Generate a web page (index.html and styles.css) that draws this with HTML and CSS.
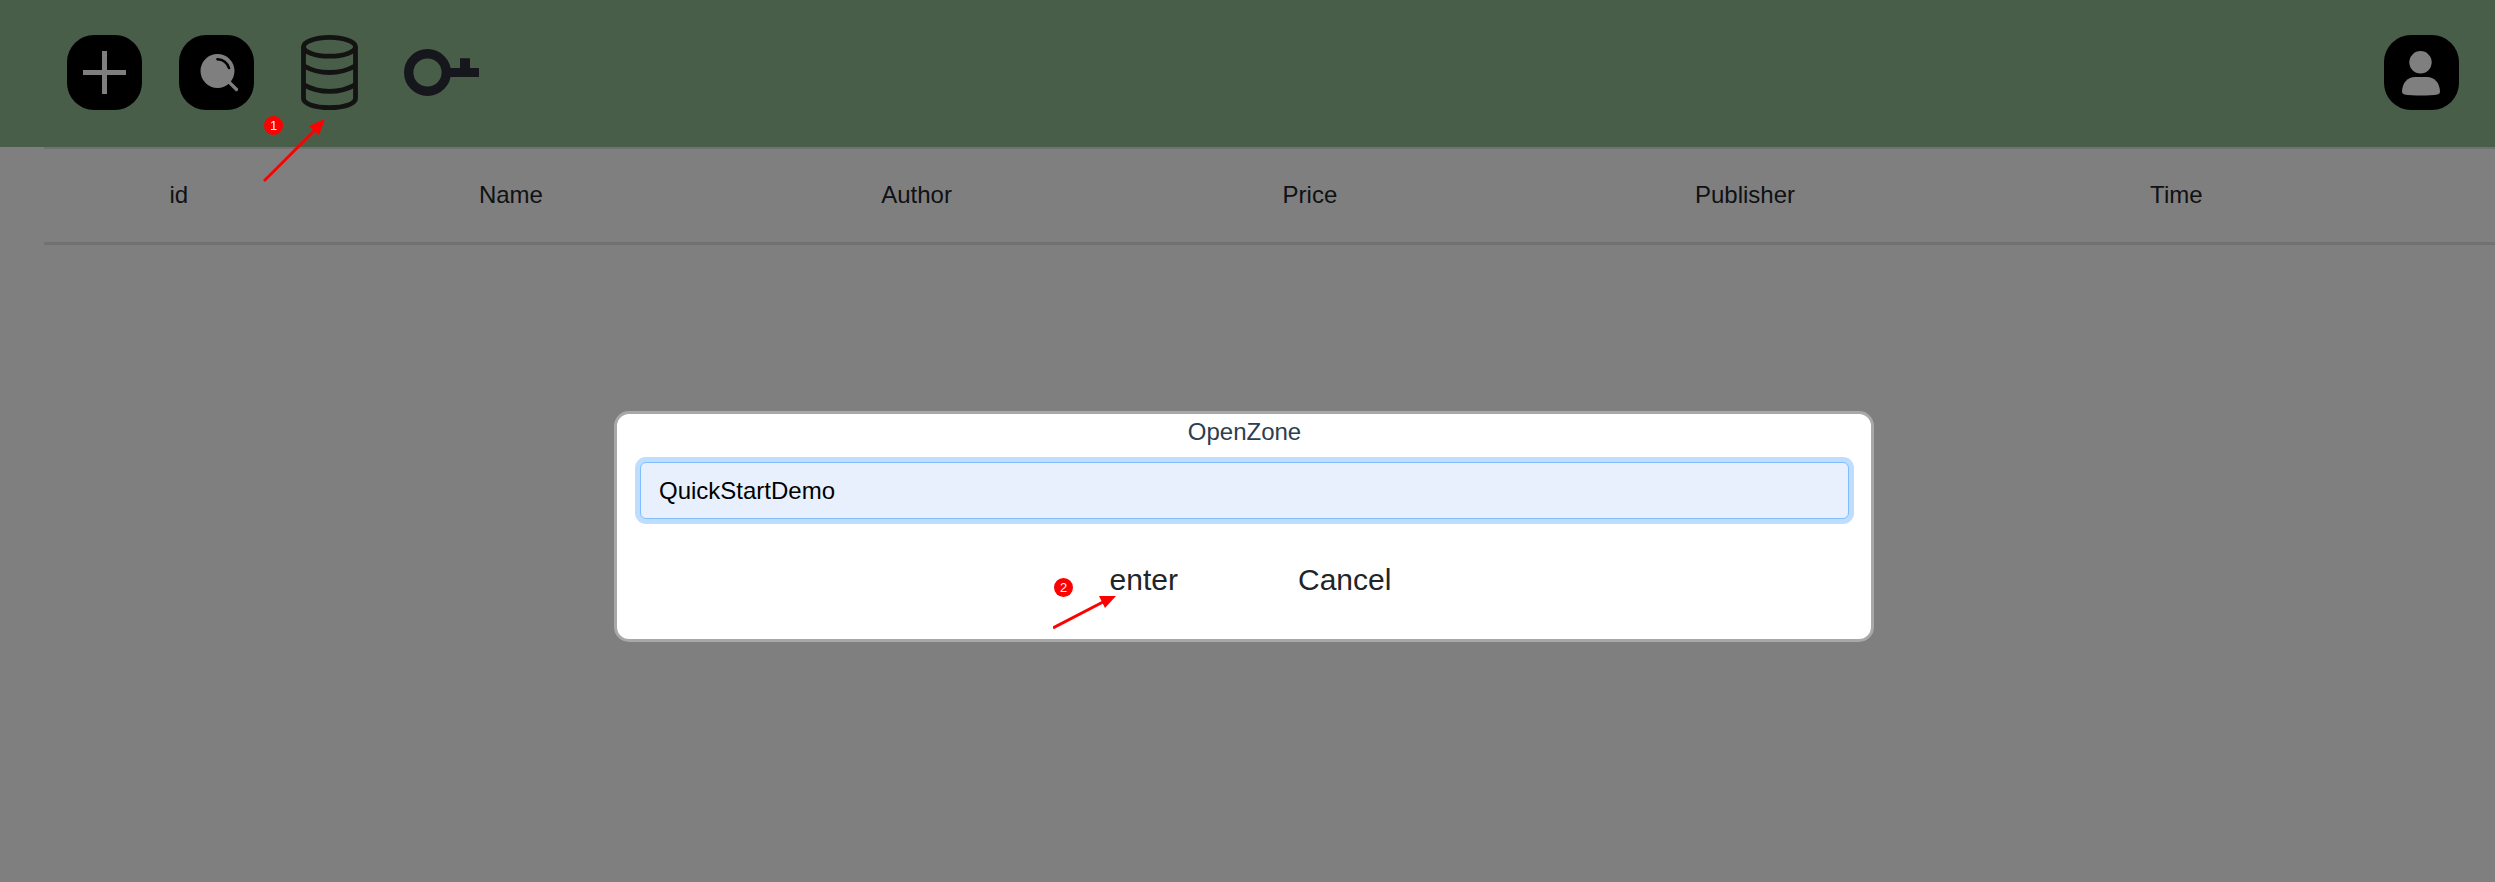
FILE: index.html
```html
<!DOCTYPE html>
<html lang="en">
<head>
<meta charset="utf-8">
<title>OpenZone</title>
<link rel="stylesheet" href="styles.css">
</head>
<body>
<header class="toolbar">
  <nav class="tools">
    <button class="tile tile-dark" type="button" aria-label="Add">
      <svg viewBox="0 0 75 75"><path d="M35 16h5v19h19v5H40v19h-5V40H16v-5h19z" fill="#fff"/></svg>
    </button>
    <button class="tile tile-dark" type="button" aria-label="Search">
      <svg viewBox="0 0 75 75" fill="none" stroke-linecap="round">
        <circle cx="38.500" cy="36" r="17" fill="#fff"/>
        <path d="M50 47L57.500 54.500" stroke="#fff" stroke-width="3.200"/>
        <path d="M38.500 24.200C44 24.200 48.500 28 50 33" stroke="#000" stroke-width="2.600"/>
      </svg>
    </button>
    <button class="tile" type="button" aria-label="Open zone">
      <svg viewBox="0 0 75 75" fill="none" stroke="#262626" stroke-width="4.800">
        <ellipse cx="38.500" cy="11.800" rx="26" ry="9.400"/>
        <path d="M12.500 11.800V63.500C12.500 68.500 23 72.600 38.500 72.600S64.500 68.500 64.500 63.500V11.800"/>
        <path d="M13 31C20 35 29 37.500 38.500 37.500S57 35 64 31M13 49.800C20 53.800 29 56.300 38.500 56.300S57 53.800 64 49.800"/>
      </svg>
    </button>
    <button class="tile" type="button" aria-label="Key">
      <svg viewBox="0 0 75 75">
        <circle cx="24.500" cy="37.500" r="18.800" fill="none" stroke="#2c2e38" stroke-width="9.400"/>
        <path d="M46 33H57V23.200H67V33H76V42H46z" fill="#2c2e38"/>
      </svg>
    </button>
  </nav>
  <button class="tile tile-dark" type="button" aria-label="Account">
    <svg viewBox="0 0 75 75" fill="#fff">
      <circle cx="36.500" cy="27.300" r="11.200"/>
      <path d="M18 57C18 47.500 24 42 31 42H43C50 42 56 47.500 56 57Q56 58.800 53.500 59.400C46 60.700 28 60.700 20.500 59.400Q18 58.800 18 57z"/>
    </svg>
  </button>
</header>

<main class="content">
  <table class="books">
    <thead>
      <tr>
        <th class="col-id" scope="col">id</th>
        <th class="col-name" scope="col">Name</th>
        <th class="col-author" scope="col">Author</th>
        <th class="col-price" scope="col">Price</th>
        <th class="col-publisher" scope="col">Publisher</th>
        <th class="col-time" scope="col">Time</th>
        <td></td>
      </tr>
    </thead>
  </table>
</main>

<div class="overlay">
  <form class="dialog" role="dialog" aria-labelledby="zone-label">
    <label class="dialog-title" id="zone-label" for="zone">OpenZone</label>
    <input class="field" id="zone" type="text" value="QuickStartDemo">
    <div class="actions">
      <button class="action" type="button">enter</button>
      <button class="action" type="button">Cancel</button>
    </div>
    <div class="step step-two">
      <span class="badge">2</span>
      <svg class="arrow" width="64" height="34" viewBox="0 0 64 34"><path d="M0 32L50 6" stroke="#f00" stroke-width="3"/><path d="M63 0L46 0L52 12z" fill="#f00"/></svg>
    </div>
  </form>
</div>

<div class="step step-one">
  <span class="badge">1</span>
  <svg class="arrow" width="64" height="64" viewBox="0 0 64 64"><path d="M1 62L52 11" stroke="#f00" stroke-width="3"/><path d="M62 0L46 7L56 16z" fill="#f00"/></svg>
</div>
</body>
</html>
```
FILE: styles.css
```css
* {
  box-sizing: border-box;
}

body {
  margin: 0;
  min-height: 100vh;
  background: #fff;
  color: #212529;
  font: 24px/36px "Liberation Sans", Arial, sans-serif;
}

button {
  border: 0;
  background: none;
  color: inherit;
  font: inherit;
}

.toolbar {
  display: flex;
  justify-content: space-between;
  padding: 35px 36px 37px 67px;
  background: #90bc90;
}

.tools {
  display: flex;
  gap: 37px;
}

.tile {
  width: 75px;
  height: 75px;
  padding: 0;
  border-radius: 27px;
}

.tile-dark {
  background: #000;
}

.tile svg {
  display: block;
  width: 100%;
  overflow: visible;
}

.content {
  padding-left: 44px;
}

.books {
  width: 100%;
  border-collapse: separate;
  border-spacing: 0;
  table-layout: fixed;
  border-top: 2px solid #dee2e6;
  border-bottom: 3px solid #dee2e6;
}

.books th {
  padding: 28px 0 29px;
  font-weight: 400;
  text-align: center;
}

.col-id { width: 11%; }
.col-name { width: 16.1%; }
.col-author { width: 17%; }
.col-price { width: 15.1%; }
.col-publisher { width: 20.4%; }
.col-time { width: 14.8%; }

.overlay {
  position: fixed;
  inset: 0;
  display: flex;
  justify-content: center;
  align-items: center;
  padding: 170px 7px 0 0;
  background: rgba(0, 0, 0, 0.5);
}

.dialog {
  position: relative;
  display: flex;
  flex-direction: column;
  width: 1260px;
  max-width: 100%;
  padding: 0 22px 37px 23px;
  border: 3px solid #a8a8a8;
  border-radius: 15px;
  background: #fff;
}

.dialog-title {
  margin-bottom: 12px;
  color: #2c3e50;
  text-align: center;
}

.field {
  width: 100%;
  padding: 10px 18px 9px;
  border: 1px solid #80bdff;
  border-radius: 6px;
  outline: 0;
  background: #e8f0fe;
  box-shadow: 0 0 0 5px #bfdeff;
  color: #000;
  font: inherit;
}

.actions {
  display: flex;
  justify-content: center;
  gap: 120px;
  margin-top: 38px;
  padding-left: 12px;
  font-size: 30px;
  line-height: 45px;
}

.action {
  padding: 0;
}

.step {
  position: absolute;
}

.step-one {
  top: 116px;
  left: 263px;
}

.step-two {
  top: 164px;
  left: 436px;
}

.badge {
  position: absolute;
  top: 0;
  left: 1px;
  width: 19px;
  height: 19px;
  border-radius: 50%;
  background: #f00;
  color: #fff;
  font-size: 13px;
  line-height: 19px;
  text-align: center;
}

.arrow {
  position: absolute;
  left: 0;
}

.step-one .arrow {
  top: 3px;
}

.step-two .arrow {
  top: 18px;
}
```
